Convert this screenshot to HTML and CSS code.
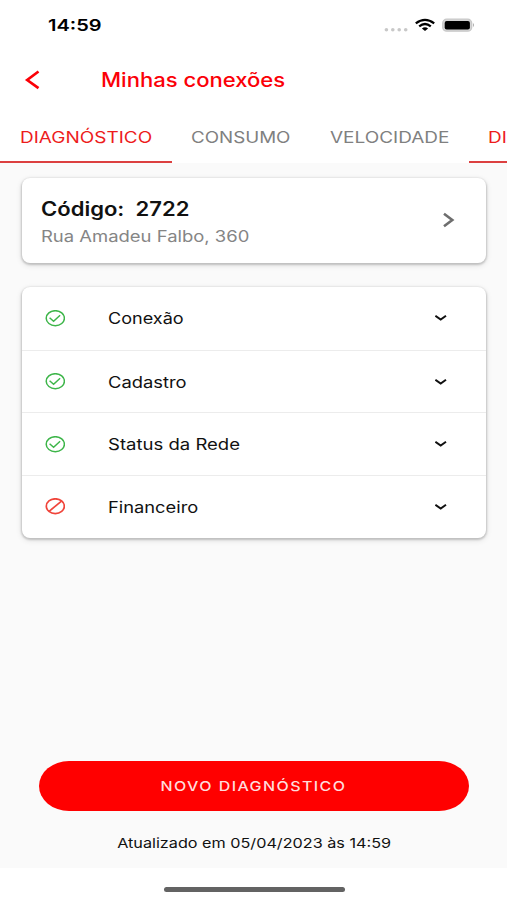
FILE: index.html
```html
<!DOCTYPE html>
<html lang="pt-BR">
<head>
<meta charset="utf-8">
<meta name="viewport" content="width=device-width, initial-scale=1">
<title>Minhas conexões</title>
<link rel="stylesheet" href="styles.css">
</head>
<body>
<div class="status">
  <span class="wide time">14:59</span>
  <svg class="status-icons" width="92" height="16" viewBox="0 0 92 16">
    <g fill="#c8c8c8"><circle cx="3.4" cy="12.7" r="1.8"/><circle cx="9.8" cy="12.7" r="1.8"/><circle cx="16.2" cy="12.7" r="1.8"/><circle cx="22.7" cy="12.7" r="1.8"/></g>
    <g fill="none" stroke="#000" stroke-width="2.3"><path d="M32.8 6.4Q42 -.6 51.2 6.4"/><path d="M36.2 9.3Q42 4.7 47.8 9.3"/></g>
    <path d="M38.9 11.5Q42 9 45.1 11.5L42 14Z"/>
    <rect x="59.7" y="2.2" width="29" height="12" rx="4" fill="#d4d4d4" stroke="#c8c8c8" stroke-width="1.3"/>
    <rect x="61.7" y="4" width="25.2" height="8.6" rx="2"/>
    <path d="M90 6q2 2 0 4.2z" fill="#aaa"/>
  </svg>
</div>
<header class="header">
  <svg class="back" width="16" height="20" viewBox="0 0 16 20"><path d="M14.5 1.5 3.2 10l11.3 8.2" fill="none" stroke="#fb0007" stroke-width="2.7"/></svg>
  <h1 class="wide title">Minhas conexões</h1>
</header>
<nav class="tabs">
  <a class="tab active"><span class="wide t1">DIAGNÓSTICO</span></a>
  <a class="tab second"><span class="wide t2">CONSUMO</span></a>
  <a class="tab third"><span class="wide t3">VELOCIDADE</span></a>
  <a class="tab active last"><span class="wide t1">DIAGNÓSTICO</span></a>
</nav>
<main class="content">
  <section class="card code">
    <div class="code-text">
      <div class="wide number">Código:&nbsp; 2722</div>
      <div class="wide address">Rua Amadeu Falbo, 360</div>
    </div>
    <svg width="14" height="18" viewBox="0 0 14 18"><path d="M3 1.7 11.3 8 3 14.3" fill="none" stroke="#6e6e6e" stroke-width="2.6"/></svg>
  </section>
  <section class="card list">
    <div class="row">
      <svg class="mark ok" viewBox="0 0 20 17"><ellipse cx="10.3" cy="8.2" rx="9.1" ry="7.5"/><path d="M4.6 7.8 8.6 11.2 15.1 5.3"/></svg>
      <span class="wide r1">Conexão</span>
      <svg class="chev" viewBox="0 0 12 8"><path d="M.4 1.7 5.7 5.6l5.3-3.9"/></svg>
    </div>
    <div class="row">
      <svg class="mark ok" viewBox="0 0 20 17"><ellipse cx="10.3" cy="8.2" rx="9.1" ry="7.5"/><path d="M4.6 7.8 8.6 11.2 15.1 5.3"/></svg>
      <span class="wide r2">Cadastro</span>
      <svg class="chev" viewBox="0 0 12 8"><path d="M.4 1.7 5.7 5.6l5.3-3.9"/></svg>
    </div>
    <div class="row">
      <svg class="mark ok" viewBox="0 0 20 17"><ellipse cx="10.3" cy="8.2" rx="9.1" ry="7.5"/><path d="M4.6 7.8 8.6 11.2 15.1 5.3"/></svg>
      <span class="wide r3">Status da Rede</span>
      <svg class="chev" viewBox="0 0 12 8"><path d="M.4 1.7 5.7 5.6l5.3-3.9"/></svg>
    </div>
    <div class="row">
      <svg class="mark bad" viewBox="0 0 20 17"><ellipse cx="10.3" cy="8.2" rx="9" ry="7.4"/><path d="M4.1 13.3 16.5 3.1"/></svg>
      <span class="wide r4">Financeiro</span>
      <svg class="chev" viewBox="0 0 12 8"><path d="M.4 1.7 5.7 5.6l5.3-3.9"/></svg>
    </div>
  </section>
  <button class="button"><span class="wide center b1">NOVO DIAGNÓSTICO</span></button>
  <p class="updated"><span class="wide center u1">Atualizado em 05/04/2023 às 14:59</span></p>
</main>
<footer class="home"><div class="bar"></div></footer>
</body>
</html>
```

FILE: styles.css
```css
* { box-sizing: border-box; }
body {
  margin: 0;
  width: 507px;
  height: 900px;
  overflow: hidden;
  display: flex;
  flex-direction: column;
  background: #fff;
  color: #111;
  font-family: Inter, "Liberation Sans", sans-serif;
}
.wide {
  display: inline-block;
  white-space: nowrap;
  transform: scaleX(var(--s, 1.2));
  transform-origin: left center;
}
.wide.center { transform-origin: center; }
.time { --s: 1.25; }
.title { --s: 1.13; }
.t1 { --s: 1.225; }
.t2 { --s: 1.21; }
.t3 { --s: 1.225; }
.number { --s: 1.13; }
.address { --s: 1.19; }
.r1 { --s: 1.165; }
.r2 { --s: 1.185; }
.r3 { --s: 1.195; }
.r4 { --s: 1.18; }
.b1 { --s: 1.185; }
.status {
  height: 48px;
  padding: 1px 32px 0 48px;
  display: flex;
  align-items: center;
  justify-content: space-between;
}
.time { font-size: 16px; font-weight: 600; color: #000; }
.header {
  height: 64px;
  padding-left: 24px;
  display: flex;
  align-items: center;
}
.title {
  margin: 0 0 0 61px;
  font-size: 19.5px;
  line-height: 24px;
  font-weight: 500;
  color: #fb0007;
}
.tabs {
  height: 51px;
  display: flex;
  overflow: hidden;
  flex: none;
}
.tab {
  flex: none;
  font-size: 15.5px;
  line-height: 51px;
  color: #808080;
  padding-left: 20px;
}
.tab.active {
  width: 172px;
  color: #ed1c1c;
  border-bottom: 2px solid #dc4040;
}
.tab.second { width: 139px; padding-left: 19px; }
.tab.third { width: 158px; padding-left: 19px; }
.tab.last { padding-left: 19px; }
.content {
  flex: 1;
  display: flex;
  flex-direction: column;
  padding: 15px 21px 0 22px;
  background: #fafafa;
}
.card {
  background: #fff;
  border-radius: 8px;
  box-shadow: 0 1px 2px 1px rgba(0, 0, 0, .17), 0 2px 6px rgba(0, 0, 0, .12);
}
.code {
  height: 85px;
  padding: 0 31px 0 19px;
  display: flex;
  align-items: center;
  justify-content: space-between;
}
.code-text { padding-top: 4px; }
.number {
  display: block;
  font-size: 19.5px;
  line-height: 28px;
  font-weight: 600;
}
.address {
  display: block;
  font-size: 15.5px;
  line-height: 28px;
  color: #858585;
}
.list { margin-top: 24px; }
.row {
  height: 62.7px;
  padding: 0 39px 0 23px;
  display: flex;
  align-items: center;
  font-size: 15.5px;
}
.row .wide { padding-top: 1px; }
.row + .row { border-top: 1px solid #ececec; }
.mark {
  width: 20px;
  height: 17px;
  margin-right: 42.5px;
  fill: none;
  stroke-width: 1.5;
}
.ok { stroke: #3db549; }
.bad { stroke: #f0443a; stroke-width: 1.7; }
.chev {
  width: 12px;
  height: 8px;
  margin-left: auto;
  fill: none;
  stroke: #111;
  stroke-width: 2;
}
.button {
  height: 50px;
  margin: auto 17px 0 16.5px;
  border: 0;
  border-radius: 30px / 25px;
  background: #ff0000;
  color: #ffdcdc;
  font: 500 13.5px Inter, "Liberation Sans", sans-serif;
  letter-spacing: 1.2px;
}
.updated {
  margin: 21px 0 13px;
  font-size: 13.5px;
  line-height: 23px;
  text-align: center;
}
.home {
  height: 32px;
  display: flex;
  justify-content: center;
  padding: 19px 0 0 1px;
}
.bar {
  width: 181px;
  height: 5px;
  border-radius: 3px;
  background: #636363;
}
```
